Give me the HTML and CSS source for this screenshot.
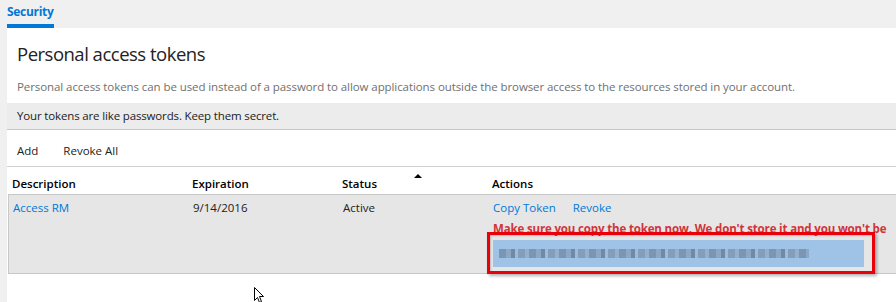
FILE: index.html
```html
<!DOCTYPE html>
<html lang="en">
<head>
  <meta charset="UTF-8" />
  <title>Security - Personal access tokens</title>
  <link rel="stylesheet" href="styles.css">
</head>
<body>
  <div class="tabs">
    <a class="tab active" href="#">Security</a>
  </div>

  <div class="panel">
    <h1 class="title">Personal access tokens</h1>
    <p class="intro">Personal access tokens can be used instead of a password to allow applications outside the browser access to the resources stored in your account.</p>

    <div class="notice">Your tokens are like passwords. Keep them secret.</div>

    <div class="toolbar">
      <a href="#">Add</a>
      <a href="#">Revoke All</a>
    </div>

    <div class="grid">
      <div class="grid-head">
        <div class="cell">Description</div>
        <div class="cell">Expiration</div>
        <div class="cell sorted">Status<span class="sort-arrow"></span></div>
        <div class="cell">Actions</div>
      </div>
      <div class="grid-row">
        <div class="cell"><a href="#">Access RM</a></div>
        <div class="cell">9/14/2016</div>
        <div class="cell">Active</div>
        <div class="cell actions">
          <div class="action-links">
            <a href="#">Copy Token</a>
            <a href="#">Revoke</a>
          </div>
          <div class="warning">Make sure you copy the token now. We don't store it and you won't be</div>
          <div class="token-field">
            <div class="token-value"><span class="blur"></span></div>
            <div class="callout"></div>
          </div>
        </div>
      </div>
    </div>
  </div>

  <svg class="pointer" width="12" height="16" viewBox="0 0 12 16">
    <path d="M0.5 0.5 L0.5 13.5 L3.5 10.5 L5.5 15.5 L7.5 14.5 L5.5 9.5 L9.5 9.5 Z" fill="#fff" stroke="#000" stroke-width="1"/>
  </svg>
</body>
</html>
```

FILE: styles.css
```css
body {
  margin: 0;
  font-family: 'Open Sans', 'Noto Sans', sans-serif;
  font-size: 12px;
  color: #222;
  background: #f0f0f0;
  height: 302px;
  overflow: hidden;
}

a {
  color: #0078d7;
  text-decoration: none;
}

.tabs {
  height: 28px;
  padding-left: 7px;
  display: flex;
}

.tab {
  font-weight: bold;
  font-size: 12px;
  line-height: 24px;
  border-bottom: 4px solid #0078d7;
  padding: 0;
  letter-spacing: -0.3px;
}

.panel {
  margin-left: 7px;
  background: #fff;
  height: 274px;
  overflow: hidden;
}

.title {
  margin: 0;
  padding: 13px 0 0 10px;
  font-size: 18.5px;
  font-weight: normal;
  line-height: 26px;
  color: #222;
  letter-spacing: -0.5px;
}

.intro {
  margin: 0;
  padding: 11px 0 0 10px;
  line-height: 17px;
  color: #707070;
  font-size: 11.5px;
  white-space: nowrap;
  letter-spacing: -0.08px;
}

.notice {
  margin-top: 8px;
  height: 26px;
  line-height: 25px;
  padding-left: 10px;
  background: #ececec;
  border-bottom: 1px solid #c8c8c8;
  color: #222;
  font-size: 11.5px;
  letter-spacing: -0.15px;
}

.toolbar {
  display: flex;
  gap: 25px;
  height: 36px;
  line-height: 42px;
  padding-left: 10px;
  border-bottom: 1px solid #d0d0d0;
  font-size: 11.5px;
}

.toolbar a {
  color: #222;
}

.grid-head,
.grid-row {
  display: grid;
  grid-template-columns: 180px 150px 150px 1fr;
  margin-left: 1px;
}

.grid-head {
  height: 27px;
  border-bottom: 1px solid #c8c8c8;
  font-weight: 600;
  font-size: 11.5px;
  color: #000;
}

.grid-head .cell {
  padding: 9px 0 0 4px;
  line-height: 16px;
}

.sorted {
  position: relative;
}

.sort-arrow {
  position: absolute;
  left: 76px;
  top: 7px;
  width: 0;
  height: 0;
  border-left: 4px solid transparent;
  border-right: 4px solid transparent;
  border-bottom: 4px solid #000;
}

.grid-row {
  height: 78px;
  background: #e6e6e6;
  border-left: 1px solid #c8c8c8;
  border-bottom: 1px solid #c8c8c8;
  font-size: 11.5px;
}

.grid-row .cell {
  padding: 4px 0 0 4px;
  line-height: 18px;
  color: #222;
  white-space: nowrap;
}

.actions {
  display: flex;
  flex-direction: column;
}

.action-links {
  display: flex;
  gap: 17px;
}

.warning {
  margin-top: 2px;
  color: #d13438;
  font-weight: bold;
  font-size: 11.5px;
  line-height: 19px;
  letter-spacing: -0.15px;
}

.token-field {
  position: relative;
  margin-top: 2px;
  width: 371px;
}

.token-value {
  height: 27px;
  background: #9fc3e7;
  display: flex;
  align-items: center;
  padding-left: 6px;
}

.blur {
  display: block;
  width: 310px;
  height: 9px;
  opacity: 0.75;
  background:
    repeating-linear-gradient(90deg, #6f87a3 0 7px, #889fba 7px 12px, #5f7895 12px 16px, #a3b8cf 16px 19px, #7a91ad 19px 26px, #94aac4 26px 30px);
  filter: blur(0.4px);
}

.callout {
  position: absolute;
  left: -6px;
  right: -11px;
  top: -8px;
  bottom: -7px;
  border: 3px solid #e8000b;
  box-shadow: 2px 2px 3px rgba(0, 0, 0, 0.3), inset 1px 1px 2px rgba(0, 0, 0, 0.2);
}

.pointer {
  position: absolute;
  left: 254px;
  top: 287px;
}
```
